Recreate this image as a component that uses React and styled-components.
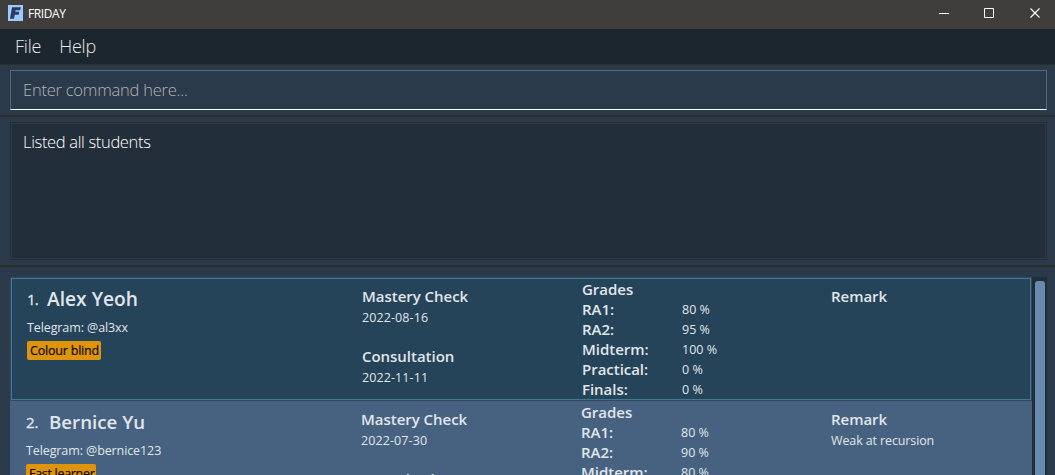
import React from "react";
import styled, { createGlobalStyle } from "styled-components";

const Global = createGlobalStyle`
  * { box-sizing: border-box; }
  html, body { margin: 0; height: 100%; overflow: hidden; }
  body { background: #2b3a4a; font-family: "Open Sans", "Noto Sans", sans-serif; color: #e0e6ea; }
`;

const Window = styled.div`
  width: 1055px; height: 475px; overflow: hidden;
  display: flex; flex-direction: column; background: #2b3a4a;
`;
const TitleBar = styled.header`
  height: 29px; flex: none; background: #403e3c; color: #fff;
  display: flex; align-items: center; padding: 0 14px 3px 8px;
`;
const Title = styled.span`
  font-size: 12px; line-height: 16px; letter-spacing: -0.4px; margin: 1px 0 0 5px; flex: 1;
`;
const Controls = styled.div`
  display: flex; gap: 35px;
  svg { display: block; }
`;
const MenuBar = styled.nav`
  height: 36px; flex: none; background: #1c262f; border-bottom: 1px solid #2d2d2c;
  display: flex; gap: 18px; padding: 5px 15px;
`;
const MenuItem = styled.span`
  font-size: 18px; font-weight: 300; line-height: 25px; letter-spacing: ${(p) => p.$ls}px; color: #e8eaeb;
`;
const CommandPane = styled.div`
  height: 52px; flex: none; padding: 5px 8px 0 10px; border-bottom: 2px solid #2b2b2b;
`;
const CommandBox = styled.div`
  height: 40px; border: 1px solid #566b79; border-bottom-color: #fff; padding: 7px 12px;
  font-size: 16.5px; font-weight: 300; line-height: 23px; letter-spacing: -0.23px; color: #b2b4b5;
`;
const ResultPane = styled.div`
  height: 150px; flex: none; padding: 5px 8px 5px 10px; border-bottom: 2px solid #2b2b2b;
`;
const ResultBox = styled.div`
  height: 138px; border: 1px solid #2d2d2d; box-shadow: inset 0 0 0 1px #2b3a49; background: #222e3a;
  padding: 7px 12px; font-size: 16.5px; font-weight: 300; line-height: 23px; letter-spacing: -0.33px; color: #fff;
`;
const ListPane = styled.main`
  flex: 1; min-height: 0; overflow: hidden; padding: 10px 8px 0 10px; display: flex;
`;
const List = styled.div`
  width: 1022px; display: flex; flex-direction: column;
`;
const Card = styled.article`
  flex: none; height: ${(p) => (p.$selected ? 124 : 123)}px;
  padding: ${(p) => (p.$selected ? "1px" : "1px 0 0")};
  background: ${(p) => (p.$selected ? "#35495c" : "#466280")};
`;
const CardBody = styled.div`
  height: 122px;
  border: ${(p) => (p.$selected ? "1px solid #3d7b8f" : "0")};
  background: ${(p) => (p.$selected ? "#254359" : "transparent")};
  padding-left: ${(p) => (p.$selected ? 15 : 16)}px;
  display: grid; grid-template-columns: 335px 220px ${(p) => (p.$selected ? 249 : 250)}px 1fr;
`;
const Profile = styled.div`
  padding-top: 8px;
`;
const NameRow = styled.div`
  display: flex; height: 26px;
`;
const Index = styled.span`
  width: ${(p) => p.$w}px; font-size: 15px; line-height: 25px; letter-spacing: ${(p) => p.$ls}px;
  -webkit-text-stroke: 0.3px currentColor;
`;
const Name = styled.span`
  font-size: ${(p) => p.$size}px; line-height: 24px; font-weight: 600;
`;
const Small = styled.div`
  font-size: 12.5px; line-height: ${(p) => p.$lh || 20}px; letter-spacing: ${(p) => p.$ls ?? 0}px; white-space: nowrap;
`;
const Tag = styled.span`
  display: block; width: ${(p) => p.$w}px; height: 19px; margin-top: -1px; padding-left: 3px;
  background: #de940b; border-radius: 2px; color: #0c0a05;
  font-size: 12.5px; line-height: 19px; letter-spacing: ${(p) => p.$ls}px; white-space: nowrap;
  -webkit-text-stroke: 0.2px currentColor;
`;
const Section = styled.section`
  padding-top: 8px;
`;
const Heading = styled.div`
  font-size: 15px; line-height: 18px; padding-bottom: 2px; font-weight: 600; letter-spacing: -0.03px; white-space: nowrap;
`;
const Spacer = styled.div`
  height: 18px;
`;
const Grades = styled.section`
  padding-top: 1px;
`;
const GradeRow = styled.div`
  display: grid; grid-template-columns: 100px 1fr; height: 20px;
`;
const Track = styled.div`
  width: 15px; background: #212d39; padding: 4px 2px 0 3px;
`;
const Thumb = styled.div`
  height: 300px; border-radius: 3px; background: #6a8bb0;
`;

const students = [
  {
    index: "1.", indexLs: -0.9, indexW: 20, name: "Alex Yeoh", nameSize: 19.2, telegram: "@al3xx", tag: "Colour blind", tagW: 74, tagLs: -0.2,
    mastery: "2022-08-16", consultation: "2022-11-11",
    grades: ["80 %", "95 %", "100 %", "0 %", "0 %"], remark: "", selected: true,
  },
  {
    index: "2.", indexLs: 0, indexW: 23, name: "Bernice Yu", nameSize: 18.7, telegram: "@bernice123", tag: "Fast learner", tagW: 70, tagLs: -0.3,
    mastery: "2022-07-30", consultation: "2022-11-11",
    grades: ["80 %", "90 %", "80 %", "0 %", "0 %"], remark: "Weak at recursion",
  },
];
const gradeNames = ["RA1:", "RA2:", "Midterm:", "Practical:", "Finals:"];

function Logo() {
  return (
    <svg width="15" height="16" viewBox="0 0 15 16">
      <rect width="15" height="16" fill="#9bcbff" />
      <path d="M4 2.3h8.8l-.6 3H7.6l-.3 1.5h4l-.6 3H6.7L6 13.7H2z" fill="#2d3b5d" />
    </svg>
  );
}

function Student({ s }) {
  return (
    <Card $selected={s.selected}>
      <CardBody $selected={s.selected}>
        <Profile>
          <NameRow>
            <Index $ls={s.indexLs} $w={s.indexW}>{s.index}</Index>
            <Name $size={s.nameSize}>{s.name}</Name>
          </NameRow>
          <Small $lh={29} $ls={-0.1}>Telegram: {s.telegram}</Small>
          <Tag $w={s.tagW} $ls={s.tagLs}>{s.tag}</Tag>
        </Profile>
        <Section>
          <Heading>Mastery Check</Heading>
          <Small $lh={22} $ls={0.1}>{s.mastery}</Small>
          <Spacer />
          <Heading>Consultation</Heading>
          <Small $lh={22} $ls={0.1}>{s.consultation}</Small>
        </Section>
        <Grades>
          <Heading>Grades</Heading>
          {gradeNames.map((g, i) => (
            <GradeRow key={g}>
              <Heading>{g}</Heading>
              <Small>{s.grades[i]}</Small>
            </GradeRow>
          ))}
        </Grades>
        <Section>
          <Heading>Remark</Heading>
          <Small $lh={22} $ls={-0.12}>{s.remark}</Small>
        </Section>
      </CardBody>
    </Card>
  );
}

export default function App() {
  return (
    <Window>
      <Global />
      <TitleBar>
        <Logo />
        <Title>FRIDAY</Title>
        <Controls>
          <svg width="11" height="11"><path d="M1 5.5h10" stroke="#fff" /></svg>
          <svg width="11" height="11"><path d="M.5.5h9v9h-9z" stroke="#fff" fill="none" /></svg>
          <svg width="11" height="11"><path d="M.5.5l9 9M9.5.5l-9 9" stroke="#fff" strokeWidth="1.2" /></svg>
        </Controls>
      </TitleBar>
      <MenuBar>
        <MenuItem $ls={-0.2}>File</MenuItem>
        <MenuItem $ls={-0.25}>Help</MenuItem>
      </MenuBar>
      <CommandPane><CommandBox>Enter command here...</CommandBox></CommandPane>
      <ResultPane><ResultBox>Listed all students</ResultBox></ResultPane>
      <ListPane>
        <List>{students.map((s) => <Student key={s.name} s={s} />)}</List>
        <Track><Thumb /></Track>
      </ListPane>
    </Window>
  );
}
